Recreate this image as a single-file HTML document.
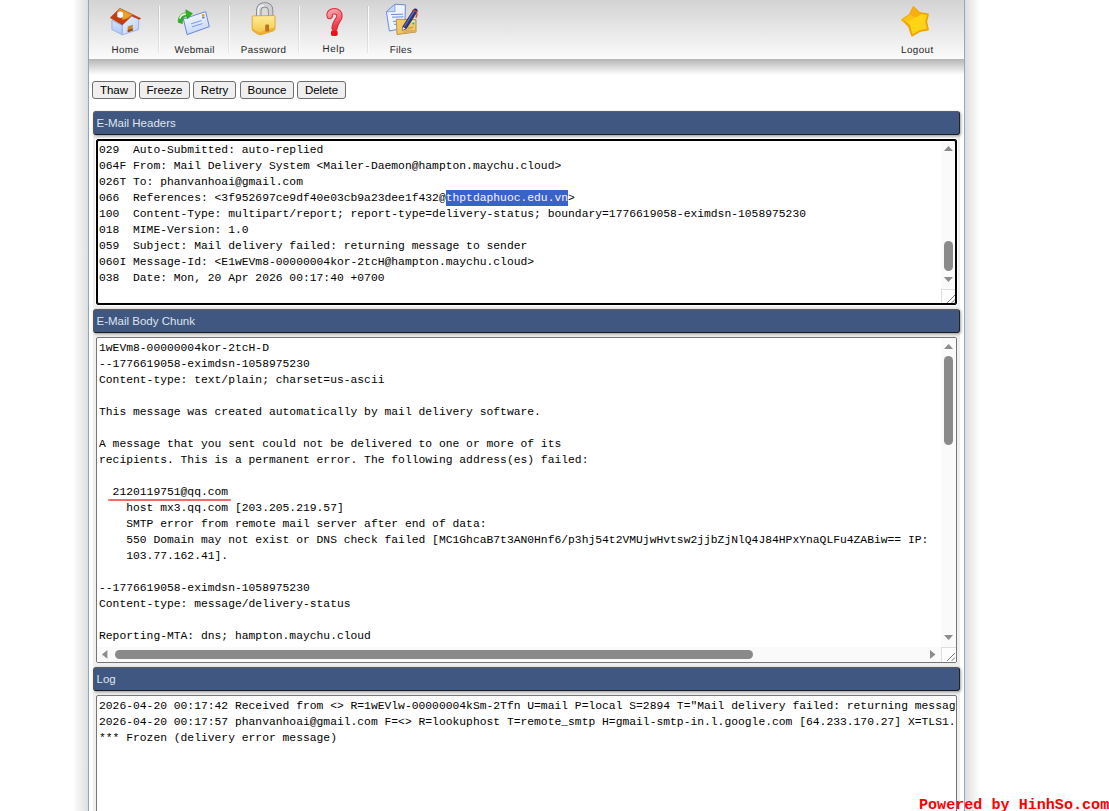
<!DOCTYPE html>
<html><head><meta charset="utf-8">
<style>
html,body{margin:0;padding:0;width:1109px;height:811px;overflow:hidden;background:#fff;}
body{position:relative;font-family:"Liberation Sans",sans-serif;}
.abs{position:absolute;}
#wrap{position:absolute;left:88px;top:0;width:875px;height:811px;border-left:1px solid #8aa8c8;border-right:1px solid #8aa8c8;background:#fff;}
#shl{position:absolute;left:73px;top:0;width:15px;height:811px;background:linear-gradient(to right,#fff,#dedede);}
#shr{position:absolute;left:965px;top:0;width:15px;height:811px;background:linear-gradient(to left,#fff,#dedede);}
#hdr{position:absolute;left:89px;top:0;width:875px;height:59px;background:linear-gradient(#d3d3d3,#fbfbfb);}
#hdrsh{position:absolute;left:89px;top:59px;width:875px;height:16px;background:linear-gradient(#b4b4b4,#fff);}
.sep{position:absolute;top:6px;width:1px;height:47px;background:rgba(0,0,0,.07);border-right:1px solid #fbfbfb;}
.lbl{position:absolute;top:45px;font-size:9.8px;text-rendering:geometricPrecision;line-height:11px;color:#262626;letter-spacing:0.32px;white-space:nowrap;}
.ico{position:absolute;width:40px;height:40px;}
.btn{position:absolute;top:81px;height:16px;border:1px solid #6f6f6f;border-radius:3px;background:#efefef;font-size:11.5px;line-height:16px;color:#000;text-align:center;box-sizing:content-box;}
.title{position:absolute;left:93px;width:867px;height:24px;box-sizing:border-box;background:#405781;border:1px solid #303030;border-color:#5c5c5c #222 #1e1e1e #575757;border-radius:3px;box-shadow:1px 1px 3px rgba(0,0,0,.38);color:#dfe5ee;font-size:11.5px;}
.title span{position:absolute;left:2.5px;top:5px;line-height:13px;}
.sect{position:absolute;left:93px;width:867px;background:#efefef;}
.ta{position:absolute;left:96px;width:861px;box-sizing:border-box;background:#fff;border:1px solid #767676;border-radius:2px;overflow:hidden;}
.mono{font-family:"Liberation Mono",monospace;font-size:11.3333px;line-height:16px;white-space:pre;color:#000;}
.lines{position:absolute;left:2px;top:2px;}
.trk{position:absolute;background:#fafafa;}
.thumb{position:absolute;background:#8a8a8a;border-radius:4.5px;}
.tri{position:absolute;width:0;height:0;}
.up{border-left:4.5px solid transparent;border-right:4.5px solid transparent;border-bottom:5px solid #8c8c8c;}
.dn{border-left:4.5px solid transparent;border-right:4.5px solid transparent;border-top:5px solid #8c8c8c;}
.lt{border-top:4.5px solid transparent;border-bottom:4.5px solid transparent;border-right:5px solid #8c8c8c;}
.rt{border-top:4.5px solid transparent;border-bottom:4.5px solid transparent;border-left:5px solid #8c8c8c;}
.rsz{position:absolute;width:14px;height:14px;background:#fdfdfd;border-left:1px solid #dedede;border-top:1px solid #dedede;box-sizing:border-box;}
</style></head><body>
<div id="shl"></div><div id="shr"></div><div id="wrap"></div>
<div id="hdr"></div>
<div id="hdrsh"></div>

<div class="sep" style="left:158px"></div>
<div class="sep" style="left:228px"></div>
<div class="sep" style="left:298px"></div>
<div class="sep" style="left:367px"></div>

<!-- ICONS -->
<svg class="ico" style="left:106px;top:2px" viewBox="0 0 40 40">
  <defs><linearGradient id="wl" x1="0" y1="0" x2="0" y2="1"><stop offset="0" stop-color="#d4e2fb"/><stop offset="1" stop-color="#aec6f2"/></linearGradient>
  <linearGradient id="wr" x1="0" y1="0" x2="1" y2="1"><stop offset="0" stop-color="#e6effd"/><stop offset="1" stop-color="#bcd0f6"/></linearGradient></defs>
  <polygon points="5.9,18.2 16.3,23.5 16.3,32.8 5.9,27.6" fill="url(#wl)" stroke="#86a2e2" stroke-width="0.7"/>
  <polygon points="16.3,23 25.6,14 32.6,16.8 32.6,27.6 16.3,32.8" fill="url(#wr)" stroke="#86a2e2" stroke-width="0.7"/>
  <polygon points="4.2,15.8 13.8,6.2 35,16.5 33,17.3 25.6,14 16.3,22.9" fill="#c53c12" stroke="#a83210" stroke-width="0.4"/>
  <polygon points="11.3,9.4 13.8,6.2 26.5,12.8 21.5,16.5 16.8,18" fill="#e39422"/>
  <polygon points="14,12 20,11 24,13.5 18,16.5" fill="#f0b030" opacity="0.6"/>
  <polygon points="11.3,10.6 14.2,9.4 17,10.4 17,14.8 14.2,16 11.3,14.8" fill="#fbfcff" stroke="#b9c6de" stroke-width="0.4"/>
  <polygon points="21.7,24.4 26.8,22.8 26.8,28.6 21.7,30.2" fill="#cf8422"/>
  <polygon points="21.7,28 26.8,26.4 26.8,28.6 21.7,30.2" fill="#9a4a12"/>
</svg>
<svg class="ico" style="left:174px;top:2px" viewBox="0 0 40 40">
  <defs><linearGradient id="env" x1="0" y1="0" x2="0.3" y2="1"><stop offset="0" stop-color="#ffffff"/><stop offset="1" stop-color="#c6d6f6"/></linearGradient></defs>
  <polygon points="9.4,17 31.6,9.6 35.3,24.7 13.1,32.6" fill="url(#env)" stroke="#5b7bd9" stroke-width="0.9"/>
  <line x1="17" y1="21.8" x2="27.5" y2="18.6" stroke="#6d8de6" stroke-width="0.9"/>
  <line x1="18" y1="24.8" x2="28.5" y2="21.6" stroke="#6d8de6" stroke-width="0.9"/>
  <circle cx="29.2" cy="13.4" r="1.4" fill="#f39a1a"/>
  <rect x="28.2" y="14.8" width="2.3" height="1.6" fill="#5a78c8"/>
  <path d="M4.4,20.5 C3.6,14.5 7.5,10.8 12,10.8 L11.8,7.8 L18.4,11.4 L13.4,17 L12.8,14.2 C9.8,14.2 8.2,17 8.6,21.5 Z" fill="#2fb020" stroke="#1f8a16" stroke-width="0.5"/>
  <path d="M5.8,16.6 C6.5,13.8 9,12.2 12,12.2" stroke="#e4f8d9" stroke-width="1.8" fill="none"/>
</svg>
<svg class="ico" style="left:244px;top:0px" viewBox="0 0 40 40">
  <defs><linearGradient id="lk" x1="0" y1="0" x2="0" y2="1"><stop offset="0" stop-color="#fdeb9a"/><stop offset="0.55" stop-color="#f8d868"/><stop offset="1" stop-color="#f0c040"/></linearGradient>
  <linearGradient id="sh" x1="0" y1="0" x2="1" y2="0"><stop offset="0" stop-color="#e6e6ea"/><stop offset="0.5" stop-color="#c4c4ca"/><stop offset="1" stop-color="#dcdce0"/></linearGradient></defs>
  <path d="M14.8,19 L14.8,10.6 C14.8,6.8 17.2,4.9 20.7,4.9 C24.2,4.9 26.6,6.8 26.6,10.6 L26.6,17" stroke="#7d7d8a" stroke-width="5.4" fill="none"/>
  <path d="M14.8,19 L14.8,10.6 C14.8,6.8 17.2,4.9 20.7,4.9 C24.2,4.9 26.6,6.8 26.6,10.6 L26.6,17" stroke="#cfcfd4" stroke-width="3.8" fill="none"/>
  <path d="M14.2,18.5 L14.2,10.6 C14.2,7.4 16.4,5.6 20,5.5" stroke="#f4f4f6" stroke-width="1.3" fill="none"/>
  <path d="M8.2,17 Q8.2,15.9 9.5,15.9 L29.8,15.5 Q31,15.5 31,16.6 L31,28.8 Q31,30 29.5,30.8 L17.5,34.6 Q15.5,35.1 14,34.2 L9.4,31.2 Q8.2,30.4 8.2,29 Z" fill="url(#lk)" stroke="#d89a1c" stroke-width="0.8"/>
  <path d="M8.6,28.6 L14.8,32.4 L30.6,27.6 L30.6,29 Q30.6,30 29.3,30.6 L17.5,34.3 Q15.6,34.8 14.2,34 L9.5,31 Q8.6,30.4 8.6,29.4 Z" fill="#eeb030"/>
  <path d="M21.2,31.6 L21.2,25.8 Q21.2,24.2 23.2,24.2 Q25.1,24.2 25.1,25.8 L25.1,31.4 Z" fill="#c07020"/>
</svg>
<svg class="ico" style="left:314px;top:2px" viewBox="0 0 40 40">
  <defs><linearGradient id="qg" x1="0" y1="0" x2="0.3" y2="1"><stop offset="0" stop-color="#f7a0aa"/><stop offset="0.5" stop-color="#f27884"/><stop offset="1" stop-color="#ea3a48"/></linearGradient></defs>
  <path d="M15.7,14 C15,10.6 17.4,9.3 20.4,9.3 C23.6,9.3 25.5,11.3 25.5,13.9 C25.5,17.9 21.2,19.6 20.6,25.6" stroke="#dc2a38" stroke-width="6.4" fill="none" stroke-linecap="round"/>
  <path d="M15.7,14 C15,10.6 17.4,9.3 20.4,9.3 C23.6,9.3 25.5,11.3 25.5,13.9 C25.5,17.9 21.2,19.6 20.6,25.6" stroke="url(#qg)" stroke-width="4.4" fill="none" stroke-linecap="round"/>
  <rect x="17" y="28.2" width="6.7" height="5.9" rx="1.8" fill="#f0101c"/>
</svg>
<svg class="ico" style="left:382px;top:0px" viewBox="0 0 40 40">
  <polygon points="4.4,11.8 13,4.2 23.4,4.9 23,20 14.3,29.6 7.4,31" fill="#eef3ff" stroke="#5f80d2" stroke-width="0.9"/>
  <polygon points="4.4,11.8 13,4.2 13,11.5" fill="#c9d8f8" stroke="#5f80d2" stroke-width="0.6"/>
  <line x1="9" y1="14.5" x2="21" y2="14.2" stroke="#5a7ed8" stroke-width="0.9"/>
  <line x1="10" y1="17.2" x2="21.5" y2="16.8" stroke="#5a7ed8" stroke-width="0.9"/>
  <line x1="11" y1="21.3" x2="14" y2="21.3" stroke="#5a7ed8" stroke-width="0.9"/>
  <line x1="12" y1="24.3" x2="14" y2="24.3" stroke="#5a7ed8" stroke-width="0.9"/>
  <polygon points="14.3,19.2 34,19.7 34,32 15,34.5" fill="#f1c964" stroke="#a98232" stroke-width="0.8"/>
  <polygon points="20,33.5 24,29 34,30.5 34,32" fill="#d8b060"/>
  <rect x="29.8" y="20.6" width="3.2" height="4" fill="#cfe8d8"/>
  <rect x="30.4" y="22.6" width="2" height="1.8" fill="#3aa838"/>
  <line x1="26" y1="28.2" x2="31" y2="27.4" stroke="#b8862e" stroke-width="0.9"/>
  <path d="M20.2,30.4 L21,26.2 L31.6,9.6 Q33.2,8 34.8,9.2 Q35.8,10.4 35,12 L24.4,28.6 Z" fill="#2c3474" stroke="#1c2050" stroke-width="0.6"/>
  <path d="M22.4,26.6 L32.6,10.4" stroke="#6070c0" stroke-width="1.2"/>
  <path d="M30.2,10.6 L34.6,11.8 L35,15 L33.8,18" stroke="#d03a1e" stroke-width="1.1" fill="none"/>
  <polygon points="20.2,30.4 21,27 23.6,28.6" fill="#e8e0d0"/>
</svg>
<svg class="ico" style="left:896px;top:0px" viewBox="0 0 40 40">
  <polygon points="17.4,7.2 23.4,12.9 32,14.4 30.2,21.7 32,29.5 23.6,31.2 16,35.6 13.2,25.4 6.2,19.7 13.8,14.8" fill="#ffd414" stroke="#f3a300" stroke-width="1.8" stroke-linejoin="round"/>
  <polygon points="17.4,7.2 23.4,12.9 24.8,14.8 19,17.8 13.8,14.8" fill="#f8ae10"/>
  <polygon points="13.8,14.8 19,17.8 13,21.5 9,21 6.2,19.7" fill="#fbc414"/>
  <polygon points="6.2,19.7 13.2,25.4 16,35.6 14.6,34 12.2,27 7.4,22" fill="#f4a80c"/>
</svg>

<div class="lbl" style="left:111.5px">Home</div>
<div class="lbl" style="left:174.6px">Webmail</div>
<div class="lbl" style="left:240.8px">Password</div>
<div class="lbl" style="left:322.6px;top:44px;letter-spacing:0.6px">Help</div>
<div class="lbl" style="left:389.8px">Files</div>
<div class="lbl" style="left:901px;letter-spacing:0.45px">Logout</div>

<div class="btn" style="left:92px;width:42px">Thaw</div>
<div class="btn" style="left:139px;width:49px">Freeze</div>
<div class="btn" style="left:193px;width:41px">Retry</div>
<div class="btn" style="left:240px;width:52px">Bounce</div>
<div class="btn" style="left:297px;width:47px">Delete</div>

<!-- section 1 -->
<div class="sect" style="top:135px;height:174px"></div>
<div class="title" style="top:111px"><span>E-Mail Headers</span></div>
<div class="ta mono" style="top:139px;height:166px;box-shadow:0 0 0 1px #fff;border-color:#000;">
<div class="lines" style="top:2px">029  Auto-Submitted: auto-replied
064F From: Mail Delivery System &lt;Mailer-Daemon@hampton.maychu.cloud&gt;
026T To: phanvanhoai@gmail.com
066  References: &lt;3f952697ce9df40e03cb9a23dee1f432@<span style="background:#3a63c9;color:#f4f4f4;padding:2px 0">thptdaphuoc.edu.vn</span>&gt;
100  Content-Type: multipart/report; report-type=delivery-status; boundary=1776619058-eximdsn-1058975230
018  MIME-Version: 1.0
059  Subject: Mail delivery failed: returning message to sender
060I Message-Id: &lt;E1wEVm8-00000004kor-2tcH@hampton.maychu.cloud&gt;
038  Date: Mon, 20 Apr 2026 00:17:40 +0700</div>
<div class="trk" style="left:844px;top:2px;width:15px;height:147px"></div>
<svg class="abs" style="left:0;top:0" width="859" height="164"><polygon points="846.9,10.9 856,10.9 851.45,5.9" fill="#8c8c8c"/><polygon points="846.9,136.9 856,136.9 851.45,141.9" fill="#8c8c8c"/></svg>
<div class="thumb" style="left:847px;top:101px;width:9px;height:30px"></div>
<div class="rsz" style="left:844px;top:149px"></div>
<svg class="abs" style="left:844px;top:149px" width="15" height="15"><path d="M6,14 L14,6 M10.5,14 L14,10.5" stroke="#555" stroke-width="0.8"/></svg>
<div class="abs" style="left:-1px;top:-1px;width:861px;height:166px;box-sizing:border-box;border:2px solid #000;border-radius:3px;"></div>
</div>

<!-- section 2 -->
<div class="sect" style="top:333px;height:334px"></div>
<div class="title" style="top:309px"><span>E-Mail Body Chunk</span></div>
<div class="ta mono" style="top:337px;height:326px;">
<div class="lines">1wEVm8-00000004kor-2tcH-D
--1776619058-eximdsn-1058975230
Content-type: text/plain; charset=us-ascii

This message was created automatically by mail delivery software.

A message that you sent could not be delivered to one or more of its
recipients. This is a permanent error. The following address(es) failed:

  2120119751@qq.com
    host mx3.qq.com [203.205.219.57]
    SMTP error from remote mail server after end of data:
    550 Domain may not exist or DNS check failed [MC1GhcaB7t3AN0Hnf6/p3hj54t2VMUjwHvtsw2jjbZjNlQ4J84HPxYnaQLFu4ZABiw== IP:
    103.77.162.41].

--1776619058-eximdsn-1058975230
Content-type: message/delivery-status

Reporting-MTA: dns; hampton.maychu.cloud</div>
<div class="abs" style="left:11px;top:161px;width:123px;height:2px;background:#f26b6b;border-radius:1px"></div>
<div class="trk" style="left:844px;top:0;width:15px;height:309px"></div>
<div class="trk" style="left:0;top:309px;width:844px;height:15px"></div>
<svg class="abs" style="left:0;top:0" width="859" height="324"><polygon points="847,11 856.1,11 851.55,6" fill="#8c8c8c"/><polygon points="847,297 856.1,297 851.55,302" fill="#8c8c8c"/><polygon points="10.4,312 10.4,320.8 4.9,316.4" fill="#8c8c8c"/><polygon points="833,312 833,320.8 838.5,316.4" fill="#8c8c8c"/></svg>
<div class="thumb" style="left:847px;top:18px;width:9px;height:89px"></div>
<div class="thumb" style="left:18px;top:312px;width:638px;height:9px"></div>
<div class="rsz" style="left:844px;top:309px;width:15px;height:15px"></div>
<svg class="abs" style="left:844px;top:309px" width="15" height="15"><path d="M6,14 L14,6 M10.5,14 L14,10.5" stroke="#555" stroke-width="0.8"/></svg>
</div>

<!-- section 3 -->
<div class="sect" style="top:691px;height:120px"></div>
<div class="title" style="top:667px"><span>Log</span></div>
<div class="ta mono" style="top:695px;height:200px;">
<div class="lines">2026-04-20 00:17:42 Received from &lt;&gt; R=1wEVlw-00000004kSm-2Tfn U=mail P=local S=2894 T="Mail delivery failed: returning message to sender"
2026-04-20 00:17:57 phanvanhoai@gmail.com F=&lt;&gt; R=lookuphost T=remote_smtp H=gmail-smtp-in.l.google.com [64.233.170.27] X=TLS1.3
*** Frozen (delivery error message)</div>
</div>

<div class="abs" style="left:919px;top:796px;font-family:'Liberation Mono',monospace;font-size:15.1px;font-weight:bold;color:#f00;white-space:pre;">Powered by HinhSo.com</div>
</body></html>
